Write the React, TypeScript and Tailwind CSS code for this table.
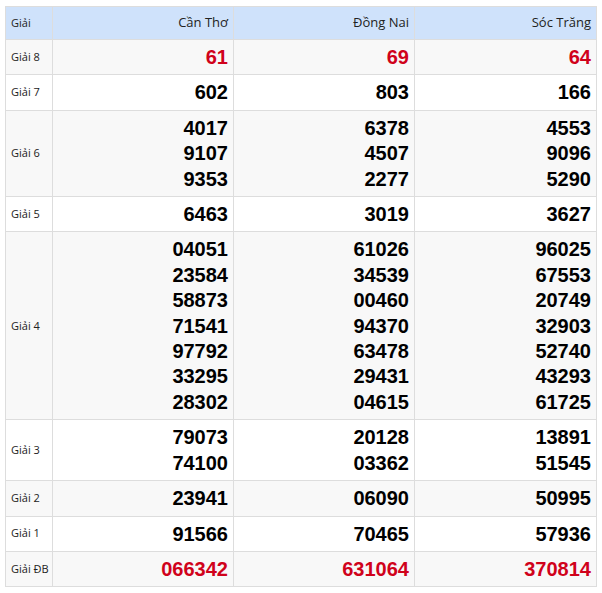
const provinces = ['Cần Thơ', 'Đồng Nai', 'Sóc Trăng'];

const rows: { label: string; red?: boolean; values: string[][] }[] = [
  { label: 'Giải 8', red: true, values: [['61'], ['69'], ['64']] },
  { label: 'Giải 7', values: [['602'], ['803'], ['166']] },
  {
    label: 'Giải 6',
    values: [
      ['4017', '9107', '9353'],
      ['6378', '4507', '2277'],
      ['4553', '9096', '5290'],
    ],
  },
  { label: 'Giải 5', values: [['6463'], ['3019'], ['3627']] },
  {
    label: 'Giải 4',
    values: [
      ['04051', '23584', '58873', '71541', '97792', '33295', '28302'],
      ['61026', '34539', '00460', '94370', '63478', '29431', '04615'],
      ['96025', '67553', '20749', '32903', '52740', '43293', '61725'],
    ],
  },
  {
    label: 'Giải 3',
    values: [
      ['79073', '74100'],
      ['20128', '03362'],
      ['13891', '51545'],
    ],
  },
  { label: 'Giải 2', values: [['23941'], ['06090'], ['50995']] },
  { label: 'Giải 1', values: [['91566'], ['70465'], ['57936']] },
  { label: 'Giải ĐB', red: true, values: [['066342'], ['631064'], ['370814']] },
];

export default function App() {
  return (
    <div className="bg-white w-[602px] h-[593px] pt-[6px] pl-[5px]">
      <table className="border-collapse w-[591px] table-fixed font-['Open_Sans','Noto_Sans',sans-serif]">
        <colgroup>
          <col className="w-[47px]" />
          <col className="w-[181px]" />
          <col className="w-[181px]" />
          <col className="w-[182px]" />
        </colgroup>
        <thead>
          <tr className="bg-[#cfe2fb] h-[33px]">
            <th className="border border-[#dddddd] text-left font-normal text-[11px] text-[#222] px-[5px]">
              Giải
            </th>
            {provinces.map((p) => (
              <th
                key={p}
                className="border border-[#dddddd] text-right font-normal text-[13px] text-[#222] px-[5px]"
              >
                {p}
              </th>
            ))}
          </tr>
        </thead>
        <tbody>
          {rows.map((row, i) => (
            <tr key={row.label} className={i % 2 === 0 ? 'bg-[#f8f8f8]' : 'bg-white'}>
              <td className="border border-[#dddddd] text-[11px] text-[#222] px-[5px] whitespace-nowrap">
                {row.label}
              </td>
              {row.values.map((vals, j) => (
                <td
                  key={j}
                  className={`border border-[#dddddd] text-right px-[5px] pt-[5px] pb-[4px] font-['Liberation_Sans',Arial,sans-serif] font-bold text-[20px] leading-[25.4px] ${
                    row.red ? 'text-[#d0021b]' : 'text-black'
                  }`}
                >
                  {vals.map((v) => (
                    <div key={v}>{v}</div>
                  ))}
                </td>
              ))}
            </tr>
          ))}
        </tbody>
      </table>
    </div>
  );
}
